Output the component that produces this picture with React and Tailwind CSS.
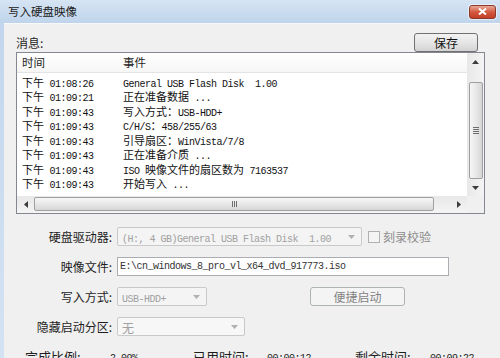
import React from "react";

const CJK = "font-['Noto_Sans_CJK_SC',sans-serif]";

function Mixed({ t, mono = "text-[10px] tracking-[-0.5px]", cjk = "text-[11px]" }) {
  const parts = t.split(/([\u0000-\u007f]+)/).filter(Boolean);
  return (
    <>
      {parts.map((p, i) =>
        /^[\u0000-\u007f]+$/.test(p) ? (
          <span key={i} className={`font-['Liberation_Mono',monospace] whitespace-pre ${mono}`}>
            {p}
          </span>
        ) : (
          <span key={i} className={`font-['Noto_Sans_CJK_SC',sans-serif] ${cjk}`}>
            {p}
          </span>
        )
      )}
    </>
  );
}

const rows = [
  ["01:08:26", "General USB Flash Disk  1.00"],
  ["01:09:21", "正在准备数据 ..."],
  ["01:09:43", "写入方式：USB-HDD+"],
  ["01:09:43", "C/H/S：458/255/63"],
  ["01:09:43", "引导扇区：WinVista/7/8"],
  ["01:09:43", "正在准备介质 ..."],
  ["01:09:43", "ISO 映像文件的扇区数为 7163537"],
  ["01:09:43", "开始写入 ..."],
];

function Arrow({ dir, color = "#3c3c3c" }) {
  const pts = {
    up: "0,4 3.5,0 7,4",
    down: "0,0 3.5,4 7,0",
    left: "4,0 0,3.5 4,7",
    right: "0,0 4,3.5 0,7",
  }[dir];
  const vert = dir === "up" || dir === "down";
  return (
    <svg width={vert ? 7 : 4} height={vert ? 4 : 7} viewBox={vert ? "0 0 7 4" : "0 0 4 7"}>
      <polygon points={pts} fill={color} />
    </svg>
  );
}

function Combo({ w, text, bg = "bg-[#f4f4f4]" }) {
  return (
    <div
      className={`h-[19px] ${w} ${bg} border border-[#c9c9c9] rounded-[2px] flex items-center pl-[4px] pr-[6px] text-[#a0a0a0] leading-none`}
    >
      <div className="flex-1 whitespace-nowrap overflow-hidden">
        <Mixed t={text} cjk="text-[12px]" />
      </div>
      <Arrow dir="down" color="#b0b0b0" />
    </div>
  );
}

function Label({ children }) {
  return (
    <div className={`w-[96px] text-right text-[12px] text-[#1e1e1e] leading-none ${CJK}`}>{children}</div>
  );
}

export default function App() {
  return (
    <div className="w-[500px] h-[358px] overflow-hidden flex flex-col bg-[#f0f0f0]">
      {/* title bar */}
      <div className="h-[23px] shrink-0 flex items-center justify-between pl-[8px] pr-[4px] bg-gradient-to-b from-[#d6e4f3] to-[#bfd4eb]">
        <div className={`text-[11.5px] text-[#1a1a1a] leading-none ${CJK}`}>写入硬盘映像</div>
        <div className="w-[27px] h-[14px] rounded-[3px] border border-[#8c3a2c] bg-gradient-to-b from-[#e9a899] via-[#d4593f] to-[#c33f27] flex items-center justify-center shadow-[0_0_0_1px_rgba(255,255,255,0.5)]">
          <svg width="9" height="7" viewBox="0 0 9 7">
            <path d="M1 0.5 L8 6.5 M8 0.5 L1 6.5" stroke="#ffffff" strokeWidth="2" />
          </svg>
        </div>
      </div>

      <div className="flex flex-1 min-h-0">
        <div className="w-[4px] bg-gradient-to-b from-[#c3d6ed] to-[#d4e3f3]" />
        <div className="flex-1 bg-[#f0f0f0] border-t border-[#f8f8f8] pl-[12px] pr-[15px] pt-[9px] flex flex-col">
          {/* top row */}
          <div className="h-[20px] flex items-start justify-between">
            <div className={`text-[12px] text-[#1e1e1e] leading-[19px] ${CJK}`}>消息:</div>
            <div className="mr-[7px] w-[64px] h-[19px] rounded-[3px] border border-[#707070] bg-gradient-to-b from-[#f2f2f2] via-[#e6e6e6] to-[#d3d3d3] flex items-center justify-center">
              <span className={`text-[12px] text-[#111] leading-none ${CJK}`}>保存</span>
            </div>
          </div>

          {/* list box */}
          <div className="h-[162px] border border-[#828790] bg-white flex flex-col">
            <div className="h-[143px] flex">
              <div className="flex-1 flex flex-col">
                <div className="h-[20px] flex items-center border-b border-[#e3e3e3] bg-gradient-to-b from-[#ffffff] to-[#f6f6f6]">
                  <div className={`w-[101px] pl-[5px] text-[11.5px] text-[#1e1e1e] leading-none ${CJK}`}>时间</div>
                  <div className={`pl-[5px] text-[11.5px] text-[#1e1e1e] leading-none ${CJK}`}>事件</div>
                </div>
                <div className="pt-[1px]">
                  {rows.map(([tm, ev], i) => (
                    <div key={i} className="h-[14.5px] flex items-center text-[#111] leading-none whitespace-nowrap">
                      <div className="w-[101px] pl-[5px]">
                        <Mixed t={"下午 " + tm} />
                      </div>
                      <div className="pl-[5px]">
                        <Mixed t={ev} />
                      </div>
                    </div>
                  ))}
                </div>
              </div>
              {/* vertical scrollbar */}
              <div className="w-[17px] bg-gradient-to-r from-[#e8e8e8] to-[#f4f4f4] flex flex-col items-center">
                <div className="h-[17px] flex items-center justify-center">
                  <Arrow dir="up" />
                </div>
                <div className="h-[12px]" />
                <div className="w-[14px] h-[97px] rounded-[2px] border border-[#a0a0a0] bg-gradient-to-r from-[#f6f6f6] via-[#e8e8e8] to-[#d6d6d6] flex flex-col items-center justify-center gap-[1px]">
                  <div className="w-[6px] h-[1px] bg-[#6e6e6e]" />
                  <div className="w-[6px] h-[1px] bg-[#6e6e6e]" />
                  <div className="w-[6px] h-[1px] bg-[#6e6e6e]" />
                  <div className="w-[6px] h-[1px] bg-[#6e6e6e]" />
                </div>
                <div className="flex-1 flex items-center justify-center">
                  <Arrow dir="down" />
                </div>
              </div>
            </div>
            {/* horizontal scrollbar */}
            <div className="h-[17px] flex bg-gradient-to-b from-[#e8e8e8] to-[#f4f4f4]">
              <div className="w-[17px] flex items-center justify-center">
                <Arrow dir="left" />
              </div>
              <div className="w-[400px] h-[14px] mt-[1px] rounded-[2px] border border-[#a0a0a0] bg-gradient-to-b from-[#f6f6f6] via-[#e8e8e8] to-[#d6d6d6] flex items-center justify-center gap-[1px]">
                <div className="w-[1px] h-[6px] bg-[#6e6e6e]" />
                <div className="w-[1px] h-[6px] bg-[#6e6e6e]" />
                <div className="w-[1px] h-[6px] bg-[#6e6e6e]" />
              </div>
              <div className="flex-1 flex items-center justify-end pr-[6px]">
                <Arrow dir="right" />
              </div>
              <div className="w-[17px] bg-[#f0f0f0]" />
            </div>
          </div>

          {/* form */}
          <div className="mt-[13px] flex flex-col gap-[11px]">
            <div className="h-[19px] flex items-center gap-[5px]">
              <Label>硬盘驱动器:</Label>
              <Combo w="w-[245px]" text="(H:, 4 GB)General USB Flash Disk  1.00" />
              <div className="ml-[1px] w-[12px] h-[12px] border border-[#b0b0b0] bg-[#f4f4f4]" />
              <div className={`-ml-[2px] text-[12px] text-[#8d8d8d] leading-none ${CJK}`}>刻录校验</div>
            </div>
            <div className="h-[19px] flex items-center gap-[5px]">
              <Label>映像文件:</Label>
              <div className="w-[332px] h-[19px] bg-white border border-[#abadb3] flex items-center pl-[2px] text-[#333] leading-none whitespace-nowrap">
                <Mixed t="E:\cn_windows_8_pro_vl_x64_dvd_917773.iso" />
              </div>
            </div>
            <div className="h-[19px] flex items-center gap-[5px]">
              <Label>写入方式:</Label>
              <Combo w="w-[90px]" text="USB-HDD+" />
              <div className="ml-[98px] w-[95px] h-[19px] rounded-[3px] border border-[#adb2b5] bg-[#f4f4f4] flex items-center justify-center">
                <span className={`text-[12px] text-[#838383] leading-none ${CJK}`}>便捷启动</span>
              </div>
            </div>
            <div className="h-[19px] flex items-center gap-[5px]">
              <Label>隐藏启动分区:</Label>
              <Combo w="w-[128px]" text="无" bg="bg-[#f7f7f7]" />
            </div>
          </div>

          <div
            className={`mt-[13px] grid grid-cols-[85px_83px_74px_88px_75px_auto] items-center pl-[9px] text-[13px] text-[#1e1e1e] leading-none whitespace-nowrap ${CJK}`}
          >
            <div>完成比例:</div>
            <div><Mixed t="2.09%" mono="text-[10px] tracking-[-0.5px]" /></div>
            <div>已用时间:</div>
            <div><Mixed t="00:00:12" mono="text-[10px] tracking-[-0.5px]" /></div>
            <div>剩余时间:</div>
            <div><Mixed t="00:09:22" mono="text-[10px] tracking-[-0.5px]" /></div>
          </div>
        </div>
      </div>
    </div>
  );
}
